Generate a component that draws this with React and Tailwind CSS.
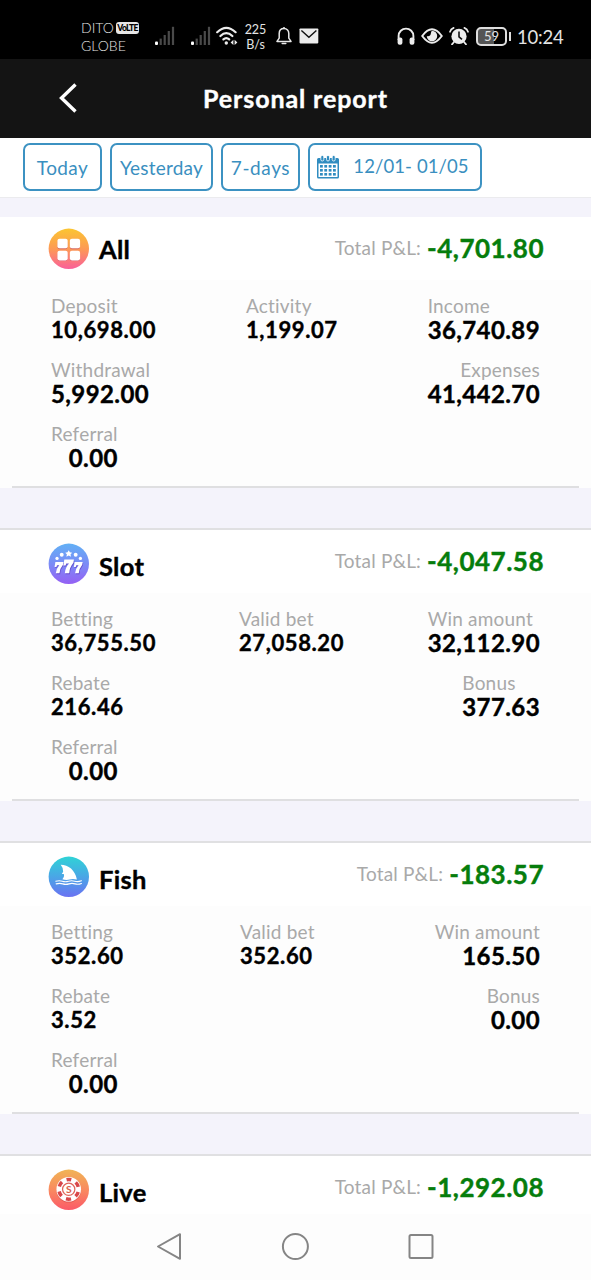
import React from 'react';

const sections = [
    {
        name: 'All',
        total: '-4,701.80',
        midOffset: 'pl-[7px]',
        rows: [
            [
                { label: 'Deposit', value: '10,698.00' },
                { label: 'Activity', value: '1,199.07' },
                { label: 'Income', value: '36,740.89', large: true }
            ],
            [
                { label: 'Withdrawal', value: '5,992.00', large: true },
                null,
                { label: 'Expenses', value: '41,442.70', large: true, right: true }
            ],
            [{ label: 'Referral', value: '0.00', large: true, right: true }, null, null]
        ]
    },
    {
        name: 'Slot',
        total: '-4,047.58',
        midOffset: 'pl-0',
        rows: [
            [
                { label: 'Betting', value: '36,755.50' },
                { label: 'Valid bet', value: '27,058.20' },
                { label: 'Win amount', value: '32,112.90', large: true }
            ],
            [
                { label: 'Rebate', value: '216.46' },
                null,
                { label: 'Bonus', value: '377.63', large: true }
            ],
            [{ label: 'Referral', value: '0.00', large: true, right: true }, null, null]
        ]
    },
    {
        name: 'Fish',
        total: '-183.57',
        midOffset: 'pl-[1px]',
        rows: [
            [
                { label: 'Betting', value: '352.60' },
                { label: 'Valid bet', value: '352.60' },
                { label: 'Win amount', value: '165.50', large: true, right: true }
            ],
            [
                { label: 'Rebate', value: '3.52' },
                null,
                { label: 'Bonus', value: '0.00', large: true, right: true }
            ],
            [{ label: 'Referral', value: '0.00', large: true, right: true }, null, null]
        ]
    },
    { name: 'Live', total: '-1,292.08', rows: [] }
];

const gradients = {
    All: ['#fbc531', '#fd9a55', '#f9609a'],
    Slot: ['#62b0f5', '#7b8cf6', '#9460f4'],
    Fish: ['#2fd3d6', '#4aa6e6', '#6a72f2'],
    Live: ['#f0b455', '#f98a60', '#fb5a68']
};

const Seven = ({ x, y, s }) => (
    <path
        d="M0.6 0H8.4L8 2.6Q4.8 6.4 4.6 11H1Q1.4 6.6 4.4 3.200H2.200L1.600 4.800H-0.200Z"
        transform={`translate(${x} ${y}) scale(${s})`}
    />
);

const CategoryIcon = ({ name }) => (
    <svg viewBox="0 0 40 40" className="h-[41px] w-[41px] shrink-0">
        <defs>
            <linearGradient id={`grad-${name}`} x1="0" y1="0" x2="0" y2="1">
                <stop offset="0" stopColor={gradients[name][0]} />
                <stop offset="0.5" stopColor={gradients[name][1]} />
                <stop offset="1" stopColor={gradients[name][2]} />
            </linearGradient>
        </defs>
        <circle cx="20.3" cy="20.3" r="19.7" fill={`url(#grad-${name})`} />
        {name === 'All' && (
            <g>
                <g fill="#c0506e" opacity="0.6">
                    <rect x="9.3" y="11.4" width="9.6" height="9.4" rx="2" />
                    <rect x="21.4" y="11.4" width="9.6" height="9.4" rx="2" />
                    <rect x="9.3" y="23" width="9.6" height="9.2" rx="2" />
                    <rect x="21.4" y="23" width="9.6" height="9.2" rx="2" />
                </g>
                <g fill="#fff">
                    <rect x="9.2" y="10.4" width="10" height="9.4" rx="2" />
                    <rect x="21.3" y="10.4" width="10" height="9.4" rx="2" />
                    <rect x="9.2" y="22.2" width="10" height="9.4" rx="2" />
                    <rect x="21.3" y="22.2" width="10" height="9.4" rx="2" />
                </g>
            </g>
        )}
        {name === 'Slot' && (
            <g>
                <g fill="#5b3bbd" opacity="0.7">
                    <Seven x={7.2} y={19.4} s={1} />
                    <Seven x={15.8} y={17.2} s={1.2} />
                    <Seven x={26} y={19.4} s={1} />
                </g>
                <g fill="#fff">
                    <Seven x={6.6} y={18.6} s={1} />
                    <Seven x={15.2} y={16.2} s={1.2} />
                    <Seven x={25.4} y={18.6} s={1} />
                    <path d="M20.200 7l1.100 2 2.300.4-1.600 1.600.4 2.300-2.200-1-2.200 1 .4-2.300-1.600-1.600 2.300-.4z" />
                    <circle cx="13.400" cy="11.400" r="1.900" />
                    <circle cx="27" cy="11.400" r="1.900" />
                    <circle cx="8.800" cy="15" r="1.600" />
                    <circle cx="31.600" cy="15" r="1.600" />
                </g>
            </g>
        )}
        {name === 'Fish' && (
            <g>
                <path d="M12.4 8.6C20 8.8 26.400 13.600 28.200 23Q24 21.800 21 23Q18 24 14 22.800Q16.400 19.800 15.400 17.600L13.400 17.600L14.800 15.400Q14.600 11 12.400 8.600Z" fill="#fff" />
                <g fill="none" stroke="#fff" strokeWidth="1.1" strokeLinecap="round">
                    <path d="M7.6 24.6q3.4-1 6.4 0t6 0t6 0t6.600-.4" />
                    <path d="M8 27.2q3.4-1 6.4 0t6 0t6 0t6.200-.4" />
                </g>
            </g>
        )}
        {name === 'Live' && (
            <g>
                <circle cx="20.2" cy="20.8" r="12" fill="#c23b3f" opacity="0.4" />
                <circle cx="20.2" cy="19.8" r="12" fill="#fff" />
                <circle cx="20.2" cy="19.8" r="9.6" fill="none" stroke="#d8474a" strokeWidth="3.4" strokeDasharray="5.03 5.02" strokeDashoffset="2.5" transform="rotate(-90 20.2 19.8)" />
                <circle cx="20.2" cy="19.8" r="6" fill="#fff" stroke="#e0665a" strokeWidth="1.2" />
                <text x="20.2" y="23.4" textAnchor="middle" fontSize="10" fontWeight="700" fill="#d9604a">S</text>
            </g>
        )}
    </svg>
);

const Signal = ({ className }) => (
    <svg viewBox="0 0 20 20" className={`h-5 w-5 ${className}`}>
        <rect x="0" y="15.600" width="3" height="3.400" rx="1" fill="#fff" />
        <rect x="4.600" y="12.600" width="2.200" height="6.400" fill="#4a4a4a" />
        <rect x="8.600" y="9" width="2.200" height="10" fill="#4a4a4a" />
        <rect x="12.700" y="5" width="2.200" height="14" fill="#4a4a4a" />
        <rect x="16.900" y="0.800" width="2.200" height="18.200" fill="#4a4a4a" />
    </svg>
);

const StatusBar = () => (
    <div className="flex h-[59px] items-start bg-black pl-[81px] text-[#e4e4e4]">
        <div className="w-[60px] shrink-0 pt-[19px] text-[14px] leading-[18px]">
            <div className="flex items-center">
                <span className="w-[35px] shrink-0 font-light">DITO</span>
                <span className="h-[12px] w-[23px] shrink-0 rounded-[3px] bg-[#e6e6e6] text-center text-[8.5px] leading-[12px] font-black tracking-[-0.7px] text-black">VoLTE</span>
            </div>
            <div className="font-light">GLOBE</div>
        </div>
        <Signal className="mt-[26px] ml-[14px]" />
        <Signal className="mt-[26px] ml-[16px]" />
        <svg viewBox="0 0 22 20" className="mt-[26px] ml-[5px] h-5 w-[22px]" fill="none" stroke="#ececec" strokeLinecap="round">
            <path d="M1.200 6.200Q10.300-2.600 19.600 6.200" strokeWidth="2.200" />
            <path d="M4.400 10Q10.300 4.400 16.400 10" strokeWidth="2.200" />
            <path d="M7.400 13.400Q10.300 10.800 13.200 13.400" strokeWidth="2.200" />
            <circle cx="10.300" cy="17" r="1.700" fill="#ececec" stroke="none" />
            <path d="M17.400 13.800L14.600 16.400L17.400 19ZM18.600 13.800L21.400 16.400L18.600 19Z" fill="#ececec" stroke="none" />
        </svg>
        <div className="ml-[5px] w-[25px] pt-[22px] text-center text-[12.5px] leading-[15px]">
            <div>225</div>
            <div>B/s</div>
        </div>
        <svg viewBox="0 0 16 18" className="mt-[27px] ml-[8px] h-[18px] w-4" fill="none" stroke="#e8e8e8" strokeWidth="1.5" strokeLinejoin="round">
            <path d="M8 1.600c-3 0-4.800 2.200-4.800 5v4.600L1 14.400h14l-2.200-3.200V6.600c0-2.800-1.800-5-4.800-5z" />
            <path d="M6.200 16.600h3.600M8 .2v1.200" strokeLinecap="round" />
        </svg>
        <svg viewBox="0 0 20 16" className="mt-[28px] ml-[7px] h-4 w-5">
            <rect x="0.500" y="0.400" width="18.800" height="15" rx="0.800" fill="#ececec" />
            <path d="M2.400 2.400L9.900 9.200L17.400 2.400" fill="none" stroke="#111" strokeWidth="1.400" />
        </svg>
        <svg viewBox="0 0 18 18" className="mt-[27px] ml-[78px] h-[18px] w-[18px]">
            <path d="M1.600 13V9a7.400 7.400 0 0 1 14.800 0v4" fill="none" stroke="#ececec" strokeWidth="1.900" />
            <rect x="0.600" y="10.600" width="4.800" height="7.200" rx="2" fill="#ececec" />
            <rect x="12.600" y="10.600" width="4.800" height="7.200" rx="2" fill="#ececec" />
        </svg>
        <svg viewBox="0 0 22 16" className="mt-[28px] ml-[6px] h-4 w-[22px]">
            <path d="M1.200 8Q11-5.400 20.800 8Q11 21.400 1.200 8Z" fill="none" stroke="#ececec" strokeWidth="1.900" />
            <path d="M11 2.800a5.200 5.200 0 1 1-5.200 5.200c1.600.6 3.200.2 3.800-1.400.5-1.400.2-2.800 1.400-3.800z" fill="#ececec" />
        </svg>
        <svg viewBox="0 0 20 18" className="mt-[27px] ml-[6px] h-[18px] w-5">
            <circle cx="10" cy="9.400" r="7.600" fill="#ececec" />
            <path d="M1 4.800Q1.800 2 4.600.9M19 4.800Q18.200 2 15.400.9M5 15l-2 2.400M15 15l2 2.400" stroke="#ececec" strokeWidth="1.700" fill="none" strokeLinecap="round" />
            <path d="M10 4.600V9.800L13 12.400" stroke="#111" strokeWidth="1.600" fill="none" />
        </svg>
        <div className="mt-[27px] ml-[7px] flex items-center">
            <div className="flex h-[19px] w-[31px] items-center justify-center rounded-[5px] border-2 border-[#dedede] bg-linear-to-r from-[#555] from-60% to-black to-60% text-[13px] leading-none">59</div>
            <div className="ml-[2px] h-[9px] w-[2px] bg-[#dedede]" />
        </div>
        <div className="ml-[6px] pt-[25px] text-[18.5px] leading-[24px] tracking-[-0.2px]">10:24</div>
    </div>
);

const CalendarIcon = () => (
    <svg viewBox="0 0 22 24" className="h-6 w-[22px]" fill="#2f8cc0">
        <path fillRule="evenodd" d="M1.500 3H20.500Q22 3 22 4.500V22Q22 23.500 20.500 23.500H1.500Q0 23.500 0 22V4.500Q0 3 1.500 3ZM1.500 8.600V22H20.500V8.600Z" />
        <g stroke="#fff" strokeWidth="0.800">
            <rect x="3.800" y="0.400" width="3" height="5.600" rx="1.500" />
            <rect x="9.500" y="0.400" width="3" height="5.600" rx="1.500" />
            <rect x="15.200" y="0.400" width="3" height="5.600" rx="1.500" />
        </g>
        {[10, 14, 18].map((y) =>
            [3, 7.3, 11.7, 16].map((x) => <rect key={`${x}-${y}`} x={x} y={y} width="2.800" height="2.600" />)
        )}
    </svg>
);

const Filters = () => {
    const button = 'flex h-12 items-center justify-center rounded-[7px] border-2 border-[#3c92c2] pt-[2px]';
    return (
        <div className="flex h-[60px] gap-2 border-b border-[#ebebee] bg-white pt-[5px] pl-[23px] text-[19px] text-[#3a8fc0]">
            <button className={`${button} w-[79px] tracking-[0.4px]`}>Today</button>
            <button className={`${button} w-[103px] tracking-[0.2px]`}>Yesterday</button>
            <button className={`${button} w-[79px] tracking-[0.6px]`}>7-days</button>
            <button className={`${button} w-[174px] gap-[14px] pr-[4px] pb-[3px] text-[18.5px] tracking-[0.1px]`}>
                <CalendarIcon />
                12/01- 01/05
            </button>
        </div>
    );
};

const Stat = ({ item }) => {
    if (!item) return <div />;
    return (
        <div className={`flex flex-col ${item.right ? 'items-end' : 'items-start'}`}>
            <span className="text-[19px] leading-6 tracking-[0.2px] text-[#a9a9a9]">{item.label}</span>
            <span className={`leading-6 font-bold text-black [-webkit-text-stroke:0.4px] ${item.large ? 'text-[24px] tracking-[0.4px]' : 'text-[22px] tracking-[0.6px]'}`}>
                {item.value}
            </span>
        </div>
    );
};

const Section = ({ section, first }) => (
    <div className={`bg-[#fdfdfd] ${first ? 'h-[271px]' : 'h-[273px] border-t-2 border-[#e0e0e2]'}`}>
        <div className={`flex h-[63px] items-start justify-between bg-white pr-[47px] pl-[48px] ${first ? 'pt-[11px]' : 'pt-[13px]'}`}>
            <div className="flex items-center gap-[10px]">
                <CategoryIcon name={section.name} />
                <span className={`text-[25.5px] leading-8 font-bold tracking-[0.3px] text-black [-webkit-text-stroke:0.4px] ${first ? 'pt-0' : 'pt-[4px]'}`}>{section.name}</span>
            </div>
            <div className={`flex items-center gap-[6px] ${first ? 'pt-[4px]' : 'pt-[2px]'}`}>
                <span className="text-[19px] leading-8 tracking-[0.2px] text-[#a9a9a9]">Total P&amp;L:</span>
                <span className="text-[26px] leading-8 font-bold tracking-[0.5px] text-[#067d0c] [-webkit-text-stroke:0.4px]">{section.total}</span>
            </div>
        </div>
        <div className="mx-3 flex h-[208px] flex-col gap-4 border-b-2 border-[#dfdfe1] pt-[14px] pr-[39px] pl-[39px]">
            {section.rows.map((row, i) => (
                <div key={i} className="grid grid-cols-[auto_1fr_auto]">
                    <div className="w-[188px]">
                        <div className="w-fit">
                            <Stat item={row[0]} />
                        </div>
                    </div>
                    <div className={section.midOffset}>
                        <Stat item={row[1]} />
                    </div>
                    <Stat item={row[2]} />
                </div>
            ))}
        </div>
    </div>
);

const NavigationBar = () => (
    <div className="flex h-[66px] items-start justify-center gap-[98px] bg-[#fdfdfd] pt-[18px] pr-[2px]">
        <svg viewBox="0 0 28 28" className="h-7 w-7" fill="none" stroke="#858585" strokeWidth="2" strokeLinejoin="round">
            <path d="M25 2.200V26.800L3 14.500Z" />
        </svg>
        <svg viewBox="0 0 28 28" className="h-7 w-7" fill="none" stroke="#858585" strokeWidth="2">
            <circle cx="14.400" cy="14.500" r="12.500" />
        </svg>
        <svg viewBox="0 0 28 28" className="h-7 w-7" fill="none" stroke="#858585" strokeWidth="2">
            <rect x="2.500" y="3" width="23" height="23" rx="1.500" />
        </svg>
    </div>
);

const App = () => (
    <div className="flex h-[1280px] w-[591px] flex-col overflow-hidden bg-[#f4f3fb] font-['Lato',sans-serif]">
        <StatusBar />
        <div className="grid h-[79px] shrink-0 grid-cols-[100px_1fr_100px] items-center bg-[#141414] text-white">
            <svg viewBox="0 0 18 30" className="mb-[2px] ml-[59px] h-[30px] w-[18px]" fill="none" stroke="#fff" strokeWidth="3.400">
                <path d="M16.500 1.500L2.500 15L16.500 28.500" />
            </svg>
            <h1 className="text-center text-[25px] font-bold tracking-[0.9px] [-webkit-text-stroke:0.4px]">Personal report</h1>
        </div>
        <Filters />
        <div className="mt-[19px] flex h-[997px] shrink-0 flex-col gap-10 overflow-hidden">
            {sections.map((section, i) => (
                <div key={section.name} className="shrink-0">
                    <Section section={section} first={i === 0} />
                </div>
            ))}
        </div>
        <NavigationBar />
    </div>
);

export default App;
